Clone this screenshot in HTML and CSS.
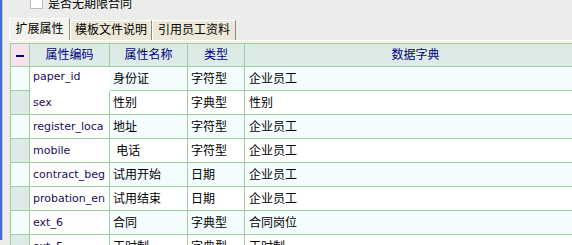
FILE: index.html
```html
<!DOCTYPE html>
<html lang="zh-CN">
<head>
  <meta charset="UTF-8" />
  <title>扩展属性</title>
  <link rel="stylesheet" href="styles.css">
</head>
<body>
  <div class="window">
    <div class="check-row">
      <span class="checkbox"></span>
      <span>是否无期限合同</span>
    </div>

    <div class="tabs">
      <div class="tab active tab-1">扩展属性</div>
      <div class="tab tab-2">模板文件说明</div>
      <div class="tab tab-3">引用员工资料</div>
    </div>

    <div class="panel">
      <table class="grid">
        <colgroup>
          <col class="c-ind">
          <col class="c-code">
          <col class="c-name">
          <col class="c-type">
          <col class="c-dict">
        </colgroup>
        <thead>
          <tr>
            <th class="ind"><span class="dash"></span></th>
            <th>属性编码</th>
            <th>属性名称</th>
            <th>类型</th>
            <th>数据字典</th>
          </tr>
        </thead>
        <tbody>
          <tr class="alt">
            <td class="ind"></td>
            <td class="code editing">paper_id</td>
            <td>身份证</td>
            <td>字符型</td>
            <td class="dict">企业员工</td>
          </tr>
          <tr>
            <td class="ind"></td>
            <td class="code">sex</td>
            <td>性别</td>
            <td>字典型</td>
            <td class="dict">性别</td>
          </tr>
          <tr class="alt">
            <td class="ind"></td>
            <td class="code">register_loca</td>
            <td>地址</td>
            <td>字符型</td>
            <td class="dict">企业员工</td>
          </tr>
          <tr>
            <td class="ind"></td>
            <td class="code">mobile</td>
            <td>&nbsp;电话</td>
            <td>字符型</td>
            <td class="dict">企业员工</td>
          </tr>
          <tr class="alt">
            <td class="ind"></td>
            <td class="code">contract_beg</td>
            <td>试用开始</td>
            <td>日期</td>
            <td class="dict">企业员工</td>
          </tr>
          <tr>
            <td class="ind"></td>
            <td class="code">probation_en</td>
            <td>试用结束</td>
            <td>日期</td>
            <td class="dict">企业员工</td>
          </tr>
          <tr class="alt">
            <td class="ind"></td>
            <td class="code">ext_6</td>
            <td>合同</td>
            <td>字典型</td>
            <td class="dict">合同岗位</td>
          </tr>
          <tr>
            <td class="ind"></td>
            <td class="code">ext_5</td>
            <td>工时制</td>
            <td>字典型</td>
            <td class="dict">工时制</td>
          </tr>
        </tbody>
      </table>
    </div>
  </div>
</body>
</html>
```

FILE: styles.css
```css
html, body {
  margin: 0;
  height: 245px;
  overflow: hidden;
}

body {
  background-color: #ecedea;
  font-family: "Liberation Sans", "Noto Sans CJK SC", sans-serif;
  font-size: 12px;
  color: #000;
}

.window {
  height: 245px;
  border-left: 2px solid #3d6cd8;
  box-shadow: inset 1px 0 0 #c9c9c2;
}

.check-row {
  display: flex;
  align-items: center;
  gap: 5px;
  height: 14px;
  margin: -5px 0 0 28px;
}

.checkbox {
  width: 11px;
  height: 11px;
  background: #fff;
  border: 1px solid #b9bcc2;
}

.tabs {
  display: flex;
  align-items: flex-end;
  height: 22px;
  margin-top: 9px;
  padding-left: 7px;
}

.tab {
  box-sizing: border-box;
  height: 20px;
  line-height: 19px;
  text-align: center;
  background-color: #ece9d8;
  border-top: 1px solid #fff;
  border-left: 1px solid #fff;
  border-right: 1px solid #8c8a7e;
}

.tab.active {
  height: 22px;
  line-height: 21px;
  background-color: #f3f2ec;
}

.tab-1 { width: 61px; }
.tab-2 { width: 82px; }
.tab-3 { width: 84px; }

.panel {
  border-top: 1px solid #fff;
  padding-top: 2px;
  background-color: #f5f3e8;
  margin-left: 8px;
}

.grid {
  border-collapse: collapse;
  table-layout: fixed;
  width: 577px;
  background-color: #fff;
}

.c-ind { width: 19px; }
.c-code { width: 80px; }
.c-name { width: 78px; }
.c-type { width: 57px; }

.grid thead tr { height: 23px; }
.grid tbody tr { height: 24px; }

.grid th,
.grid td {
  border: 1px solid #a2cd9f;
  padding: 0 3px;
  line-height: 14px;
  white-space: nowrap;
  overflow: hidden;
}

.grid th {
  background-color: #dcebe5;
  color: #00007f;
  font-weight: normal;
  text-align: center;
}

.grid th.ind {
  background-color: #f5e2ee;
  padding: 0;
}

.dash {
  display: inline-block;
  width: 8px;
  height: 2px;
  background-color: #00007f;
  vertical-align: middle;
}

.grid td.ind {
  background-color: #dcebe5;
}

.grid tr.alt td {
  background-color: #f3fdfd;
}

.grid td.code,
.grid tr.alt td.code {
  background-color: #fff;
  color: #1d0c5c;
  font-family: "DejaVu Sans", sans-serif;
  font-size: 11px;
  padding: 1px 0 0 3px;
}

.grid td.editing,
.grid tr.alt td.editing {
  border-right-color: #f3fdfd;
  border-bottom-color: #fff;
  padding: 0 0 3px 3px;
}

.grid td.dict {
  padding-left: 4px;
}
```
